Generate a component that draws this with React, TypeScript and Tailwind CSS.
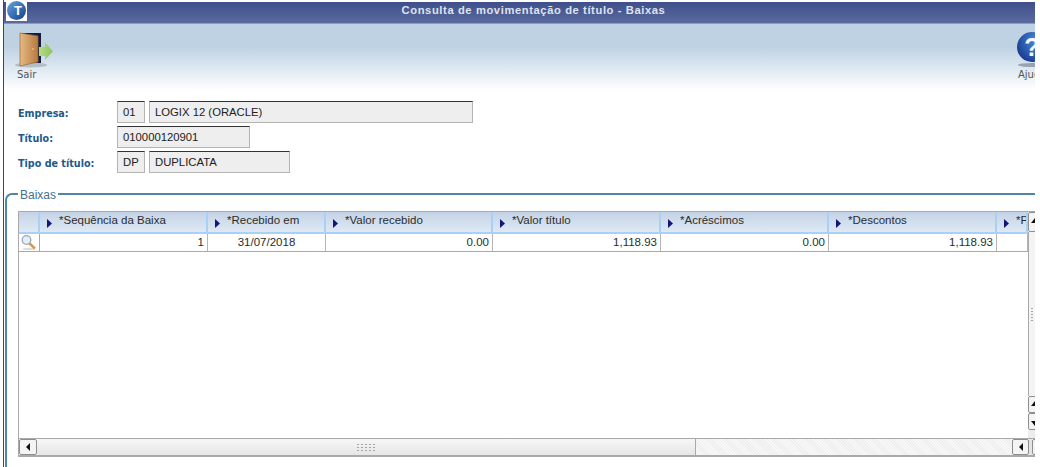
import React from "react";

type Column = {
  title: string;
  width: string;
  value: string;
  align: string;
};

const columns: Column[] = [
  { title: "*Sequência da Baixa", width: "w-[168px]", value: "1", align: "text-right" },
  { title: "*Recebido em", width: "w-[118px]", value: "31/07/2018", align: "text-center" },
  { title: "*Valor recebido", width: "w-[167px]", value: "0.00", align: "text-right" },
  { title: "*Valor título", width: "w-[168px]", value: "1,118.93", align: "text-right" },
  { title: "*Acréscimos", width: "w-[168px]", value: "0.00", align: "text-right" },
  { title: "*Descontos", width: "w-[168px]", value: "1,118.93", align: "text-right" },
  { title: "*Pago", width: "w-[31px]", value: "", align: "text-right" },
];

function DoorIcon() {
  return (
    <svg width="40" height="38" viewBox="0 0 40 38">
      <defs>
        <linearGradient id="door" x1="0" y1="0" x2="1" y2="0">
          <stop offset="0" stopColor="#e6b983" />
          <stop offset="1" stopColor="#b67a40" />
        </linearGradient>
        <linearGradient id="arrow" x1="0" y1="0" x2="1" y2="0">
          <stop offset="0" stopColor="#b4da8c" />
          <stop offset="1" stopColor="#8fc45a" />
        </linearGradient>
      </defs>
      <ellipse cx="17" cy="34" rx="16" ry="2.5" fill="#8d98a3" opacity="0.5" />
      <rect x="8" y="2" width="19" height="30" fill="#161b3c" />
      <path d="M6 2 L24 5 L24 31 L6 35 Z" fill="url(#door)" stroke="#9a6a38" strokeWidth="0.7" />
      <circle cx="19" cy="18" r="1" fill="#f2c14e" />
      <path d="M25 16 L31 16 L31 11 L39 20.5 L31 29 L31 25 L25 25 Z" fill="url(#arrow)" />
    </svg>
  );
}

function HelpIcon() {
  return (
    <svg width="38" height="38" viewBox="0 0 38 38">
      <defs>
        <radialGradient id="help" cx="0.7" cy="0.3" r="0.9">
          <stop offset="0" stopColor="#4f8fe0" />
          <stop offset="1" stopColor="#112f86" />
        </radialGradient>
      </defs>
      <ellipse cx="19" cy="33" rx="14" ry="2" fill="#7d8791" opacity="0.7" />
      <circle cx="19" cy="15" r="15" fill="url(#help)" />
      <text x="19" y="24" textAnchor="middle" fontSize="25" fontWeight="700" fill="#f4f6fb" fontFamily="Liberation Sans, sans-serif">
        ?
      </text>
    </svg>
  );
}

function SearchIcon() {
  return (
    <svg width="18" height="17" viewBox="0 0 18 17">
      <ellipse cx="9" cy="15" rx="7" ry="1.2" fill="#dcdcdc" />
      <line x1="9" y1="9" x2="15" y2="14.5" stroke="#d9964c" strokeWidth="2.4" />
      <circle cx="6.5" cy="6" r="4.3" fill="#e4eef7" stroke="#9aa7b3" strokeWidth="1.3" />
    </svg>
  );
}

function Field({ text, width }: { text: string; width: string }) {
  return (
    <div
      className={`${width} h-[22px] flex items-center pl-[5px] pt-[1px] text-[11.3px] text-[#222] bg-[#eeeeee] border border-[#b4b4b4] border-t-[#333]`}
    >
      {text}
    </div>
  );
}

function FormRow({ label, children }: { label: string; children: React.ReactNode }) {
  return (
    <div className="flex items-center h-[22px]">
      <span className="w-[99px] pt-[4px] font-['DejaVu_Sans'] font-bold text-[9.6px] text-[#1d5a8c]">{label}</span>
      <div className="flex gap-[4px]">{children}</div>
    </div>
  );
}

function ArrowButton({ dir, className }: { dir: "left" | "right" | "up" | "down"; className: string }) {
  const points = {
    left: "7,3 3,7 7,11",
    right: "3,3 7,7 3,11",
    up: "1,8 5,3 9,8",
    down: "1,6 5,11 9,6",
  }[dir];
  return (
    <div className={`flex items-center shrink-0 overflow-hidden bg-[#f4f4f4] border border-[#8e8e8e] rounded-[2px] ${className}`}>
      <svg width="10" height="14" viewBox="0 0 10 14" className="shrink-0">
        <polygon points={points} fill="#111" />
      </svg>
    </div>
  );
}

function Grip({ className, count }: { className: string; count: number }) {
  return (
    <div className={`grid gap-[2px] ${className}`}>
      {Array.from({ length: count }).map((_, i) => (
        <span key={i} className="w-[2px] h-[1px] bg-[#a5a5a5]" />
      ))}
    </div>
  );
}

export default function App() {
  return (
    <div className="w-[1040px] h-[467px] overflow-hidden bg-white font-['Liberation_Sans',sans-serif]">
      <div className="w-[1032px] h-[467px] flex flex-col pt-[2px] ml-[3px] border-l border-l-[#1d4f80] overflow-hidden">
        {/* title bar */}
        <div className="relative h-[22px] shrink-0 flex items-center justify-center bg-gradient-to-b from-[#3f4f8b] to-[#5a6a9e] border-b border-[#8a9bc2]">
          <span className="ml-[28px] text-[11.2px] tracking-[0.6px] font-bold text-[#dfe3ee] pb-[4px]">Consulta de movimentação de título - Baixas</span>
          <div className="absolute left-[2px] -top-[2px] w-[21px] h-[21px] bg-white flex items-center justify-center">
            <div className="w-[19px] h-[19px] rounded-full bg-gradient-to-br from-[#6aa5e0] to-[#123f8c] flex items-center justify-center pl-[3px] text-white text-[13px] font-bold">
              T
            </div>
          </div>
        </div>

        {/* toolbar */}
        <div className="h-[66px] shrink-0 flex justify-between bg-gradient-to-b from-[#bfd2e4] from-35% to-white pl-[10px]">
          <div className="flex flex-col items-start w-[40px] pt-[7px]">
            <DoorIcon />
            <span className="font-['DejaVu_Sans'] text-[10px] leading-[12px] text-[#555] ml-[3px]">Sair</span>
          </div>
          <div className="flex flex-col items-start w-[18px] overflow-hidden pt-[8px]">
            <div className="w-[38px] -ml-[4px]">
              <HelpIcon />
            </div>
            <span className="font-['DejaVu_Sans'] text-[10px] leading-[12px] text-[#555] -mt-[1px] ml-[1px] whitespace-nowrap">Ajuda</span>
          </div>
        </div>

        {/* form */}
        <div className="flex flex-col gap-[3px] pl-[14px] pt-[11px] shrink-0">
          <FormRow label="Empresa:">
            <Field text="01" width="w-[28px]" />
            <Field text="LOGIX 12 (ORACLE)" width="w-[324px]" />
          </FormRow>
          <FormRow label="Título:">
            <Field text="010000120901" width="w-[133px]" />
          </FormRow>
          <FormRow label="Tipo de título:">
            <Field text="DP" width="w-[28px]" />
            <Field text="DUPLICATA" width="w-[141px]" />
          </FormRow>
        </div>

        {/* baixas */}
        <fieldset className="mt-[14px] ml-[1px] flex-1 min-h-0 min-w-0 border-t-[2px] border-l-[2px] border-[#4f86a6] rounded-tl-[7px] pl-[11px]">
          <legend className="px-[2px] text-[12px] leading-[14px] text-[#44708f]">
            <span className="block translate-y-[1px]">Baixas</span>
          </legend>
          <div className="mt-[10px] h-[246px] w-[1022px] border-t border-l border-b-2 border-[#a9a9a9] flex flex-col bg-white">
            <div className="flex-1 min-h-0 flex">
              <div className="w-[1009px] shrink-0 overflow-hidden">
                <div className="flex h-[22px] bg-gradient-to-b from-[#c3d3e5] to-[#dfe9f5] border-b-2 border-[#a9d0f5]">
                  <div className="w-[21px] shrink-0 border-r-2 border-[#a9d0f5]" />
                  {columns.map((col) => (
                    <div
                      key={col.title}
                      className={`${col.width} shrink-0 flex items-center pl-[7px] gap-[5px] overflow-hidden whitespace-nowrap border-r-2 border-[#a9d0f5] text-[11.5px] text-[#2c2c2c] pb-[2px]`}
                    >
                      <svg width="6" height="9" viewBox="0 0 6 9" className="shrink-0 mt-[4px] mr-[1px]">
                        <polygon points="0,0 5,4.5 0,9" fill="#14147a" />
                      </svg>
                      {col.title}
                    </div>
                  ))}
                </div>
                <div className="flex h-[18px] border-b border-[#a9a9a9]">
                  <div className="w-[21px] shrink-0 border-r border-[#a9a9a9] flex items-center justify-center">
                    <SearchIcon />
                  </div>
                  {columns.map((col) => (
                    <div
                      key={col.title}
                      className={`${col.width} shrink-0 px-[3px] border-r border-[#b5b5b5] text-[11.5px] leading-[16px] text-[#2c2c2c] ${col.align}`}
                    >
                      {col.value}
                    </div>
                  ))}
                </div>
              </div>
              {/* vertical scrollbar */}
              <div className="w-[12px] shrink-0 flex flex-col">
                <ArrowButton dir="up" className="w-[12px] h-[20px] pl-[1px]" />
                <div className="flex-1 border-l border-[#a9a9a9] bg-[#f4f4f4] flex items-center pl-[2px]">
                  <Grip className="grid-cols-2" count={10} />
                </div>
                <ArrowButton dir="up" className="w-[12px] h-[17px] pl-[1px]" />
                <ArrowButton dir="down" className="w-[12px] h-[17px] pl-[1px]" />
                <div className="h-[8px] bg-[#ececec]" />
              </div>
            </div>
            {/* horizontal scrollbar */}
            <div className="h-[17px] shrink-0 flex border-t border-[#a9a9a9]">
              <ArrowButton dir="left" className="w-[18px] h-full justify-center" />
              <div className="w-[659px] h-full bg-gradient-to-b from-[#f6f6f6] to-[#e6e6e6] border-r border-[#a9a9a9] flex items-center justify-center">
                <Grip className="grid-cols-5" count={15} />
              </div>
              <div className="flex-1 h-full bg-[repeating-linear-gradient(45deg,#f8f8f8_0,#f8f8f8_1px,#eeeeee_1px,#eeeeee_2px)]" />
              <ArrowButton dir="left" className="w-[17px] h-full justify-center" />
              <div className="w-[3px] h-full bg-[#e4e4e4]" />
              <ArrowButton dir="right" className="w-[8px] h-full" />
            </div>
          </div>
        </fieldset>
      </div>
    </div>
  );
}
